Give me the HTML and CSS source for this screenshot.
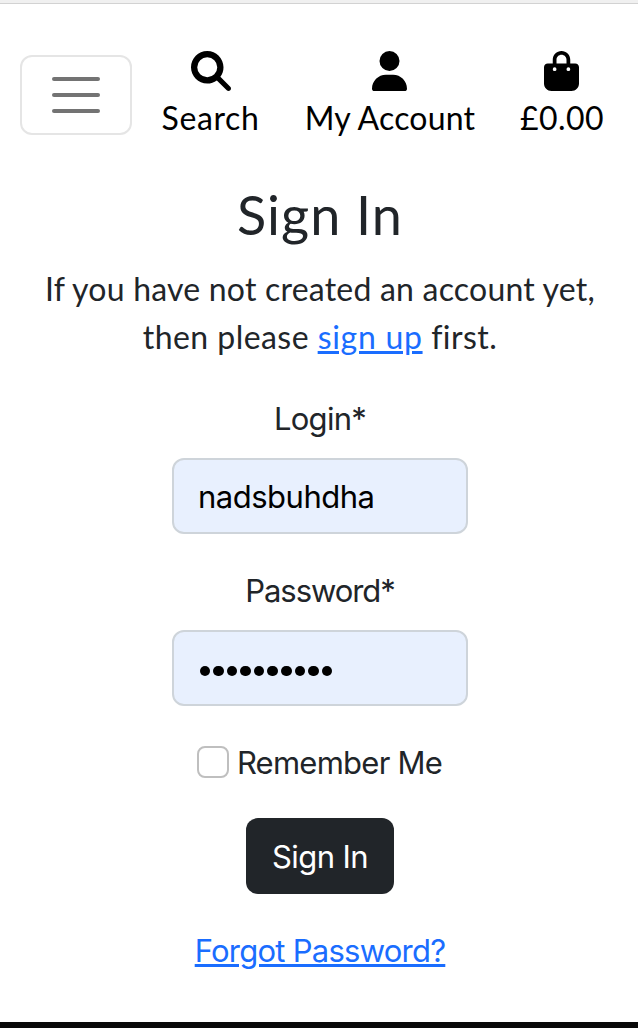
FILE: index.html
```html
<!DOCTYPE html>
<html lang="en">
<head>
<meta charset="utf-8">
<title>Sign In</title>
<link rel="stylesheet" href="styles.css">
</head>
<body>
<div class="topline"></div>
<header class="header">
  <button class="toggler" aria-label="Menu"><span class="bar"></span><span class="bar"></span><span class="bar"></span></button>
  <a class="nav-item">
    <svg class="icon" viewBox="0 0 512 512"><path d="M416 208c0 45.900-14.900 88.300-40 122.700L502.600 457.400c12.500 12.500 12.500 32.800 0 45.300s-32.800 12.500-45.300 0L330.700 376c-34.400 25.200-76.800 40-122.700 40C93.100 416 0 322.900 0 208S93.100 0 208 0S416 93.100 416 208zM208 336a128 128 0 1 0 0-256 128 128 0 1 0 0 256z"/></svg>
    <span class="nav-text search-text">Search</span>
  </a>
  <a class="nav-item">
    <svg class="icon" viewBox="0 0 448 512"><path d="M224 256A128 128 0 1 0 224 0a128 128 0 1 0 0 256zm-45.700 48C79.800 304 0 383.800 0 482.300C0 498.700 13.300 512 29.700 512H418.300c16.400 0 29.700-13.300 29.700-29.700C448 383.800 368.200 304 269.700 304H178.300z"/></svg>
    <span class="nav-text account-text">My Account</span>
  </a>
  <a class="nav-item">
    <svg class="icon" viewBox="0 0 448 512"><path d="M160 112c0-35.300 28.700-64 64-64s64 28.700 64 64v48H160V112zm-48 48H48c-26.500 0-48 21.500-48 48V416c0 53 43 96 96 96H352c53 0 96-43 96-96V208c0-26.500-21.500-48-48-48H336V112C336 50.100 285.900 0 224 0S112 50.100 112 112v48zm24 48a24 24 0 1 1 0 48 24 24 0 1 1 0-48zm152 24a24 24 0 1 1 48 0 24 24 0 1 1-48 0z"/></svg>
    <span class="nav-text price-text">£0.00</span>
  </a>
</header>
<main class="main">
  <h1 class="title">Sign In</h1>
  <p class="intro"><span class="intro-first">If you have not created an account yet,</span><br><span class="intro-second">then please <a class="link signup" href="#">sign up</a> first.</span></p>
  <form class="form">
    <label class="label login-label" for="login">Login*</label>
    <input class="field" id="login" type="text" value="nadsbuhdha">
    <label class="label password-label" for="password">Password*</label>
    <div class="field dots" id="password"><i class="dot"></i><i class="dot"></i><i class="dot"></i><i class="dot"></i><i class="dot"></i><i class="dot"></i><i class="dot"></i><i class="dot"></i><i class="dot"></i><i class="dot"></i></div>
    <div class="remember"><span class="check"></span><span class="remember-text">Remember Me</span></div>
    <button class="submit" type="button">Sign In</button>
    <a class="link forgot" href="#">Forgot Password?</a>
  </form>
</main>
<footer class="footer"></footer>
</body>
</html>
```
FILE: styles.css
```css
* { box-sizing: border-box; }
body {
  margin: 0;
  height: 1028px;
  display: flex;
  flex-direction: column;
  overflow: hidden;
  background: #fff;
  color: #212529;
  font: 31px/48px Inter, sans-serif;
}
.topline { height: 4px; background: #f0f0f0; border-bottom: 1px solid #d2d2d2; }
.header {
  height: 138px;
  padding: 46px 0 0 20px;
  display: flex;
  align-items: flex-start;
}
.toggler {
  width: 112px;
  height: 80px;
  margin: 5px 28px 0 0;
  padding: 0;
  display: flex;
  flex-direction: column;
  align-items: center;
  justify-content: center;
  gap: 12px;
  background: none;
  border: 2px solid #e5e5e5;
  border-radius: 12px;
}
.bar { width: 48px; height: 4px; border-radius: 2px; background: #737373; }
.nav-item {
  display: flex;
  flex-direction: column;
  align-items: center;
  width: 101px;
  margin-right: 43px;
  color: #000;
}
.nav-item:nth-child(3) { width: 171px; margin-right: 43px; }
.nav-item:nth-child(4) { width: 87px; margin-right: 0; }
.icon { height: 40px; margin-top: 1px; display: block; overflow: visible; }
.nav-text, .title, .intro { font-family: Lato, sans-serif; font-weight: 400; }
.nav-text { font-size: 32px; line-height: 48px; margin-top: 3px; white-space: nowrap; }
.search-text { letter-spacing: 0.6px; }
.account-text { letter-spacing: 0.2px; padding-left: 1px; }
.price-text { letter-spacing: 0.4px; padding-left: 1px; }
.main { flex: 1; text-align: center; padding: 40px 0 0 2px; }
.title { margin: 0; font-size: 54px; line-height: 66px; letter-spacing: 1px; }
.intro { margin: 17px 0 0; font-size: 32px; line-height: 48px; white-space: nowrap; }
.intro-first { letter-spacing: 0.21px; }
.intro-second { letter-spacing: 0.45px; }
.signup { letter-spacing: 0.7px; }
.link { color: #1a6dff; text-decoration: underline; text-decoration-thickness: 3px; text-underline-offset: 2px; }
.form { display: flex; flex-direction: column; align-items: center; margin-top: 34px; }
.label { height: 48px; margin-bottom: 15px; }
.login-label { letter-spacing: -0.75px; }
.password-label { letter-spacing: -1.05px; margin-top: 1px; }
.field {
  width: 296px;
  height: 76px;
  padding: 0 24px;
  font: 31px Inter, sans-serif;
  letter-spacing: -0.5px;
  color: #000;
  background: #e8f0fe;
  border: 2px solid #ced4da;
  border-radius: 12px;
  margin-bottom: 32px;
}
.dots { display: flex; align-items: center; gap: 3.1px; padding: 6px 25.5px 0; }
.dot { width: 10.5px; height: 10.5px; border-radius: 50%; background: #000; }
.remember { display: flex; align-items: center; gap: 8px; height: 48px; margin-right: 1px; }
.remember-text { letter-spacing: -0.75px; margin-top: 2px; }
.check { width: 32px; height: 32px; border: 2px solid #bfbfbf; border-radius: 8px; }
.submit {
  width: 148px;
  height: 76px;
  margin: 32px 0 33px;
  padding: 1px 0 0;
  border: 0;
  border-radius: 12px;
  background: #212529;
  color: #fff;
  font: 31px Inter, sans-serif;
  letter-spacing: -0.6px;
}
.forgot { letter-spacing: -0.75px; }
.footer { height: 6px; background: #080808; }
```
